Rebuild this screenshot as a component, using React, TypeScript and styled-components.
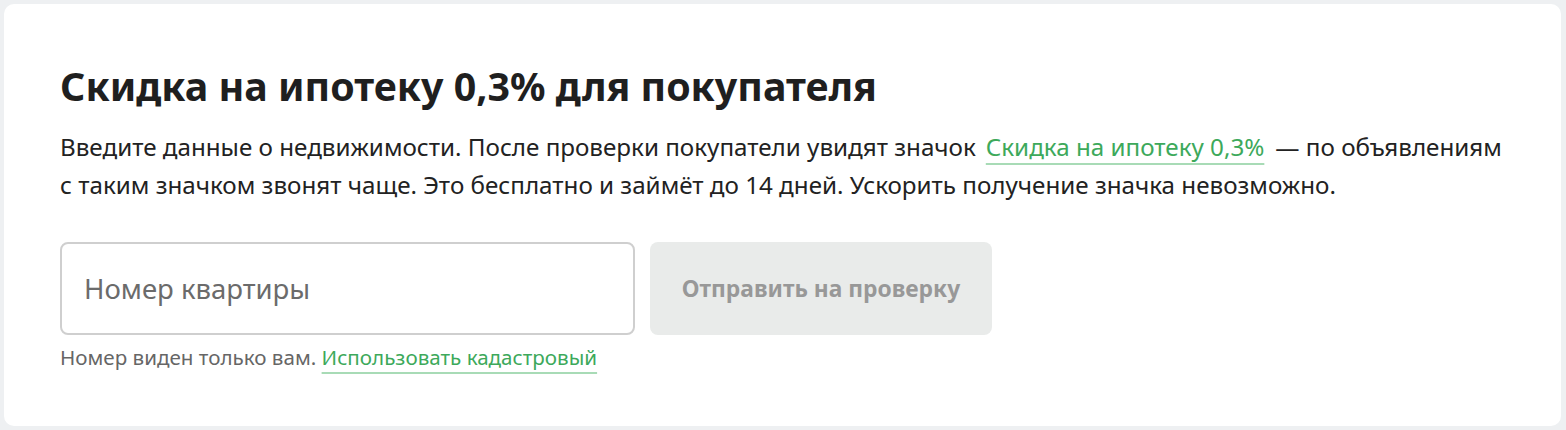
import React from "react";
import styled, { createGlobalStyle } from "styled-components";

const Global = createGlobalStyle`
  html, body { margin: 0; padding: 0; background: #eef0f2; }
  body { font-family: "Noto Sans", "Open Sans", sans-serif; }
  * { box-sizing: border-box; }
`;

const Page = styled.div`
  padding: 4px 5px 4px 4px;
`;

const Card = styled.section`
  background: #ffffff;
  border-radius: 10px;
  padding: 56px 56px 40px 56px;
  min-height: 422px;
`;

const Title = styled.h1`
  margin: 0;
  font-size: 39.4px;
  line-height: 52px;
  font-weight: 700;
  color: #1f1f1f;
`;

const Description = styled.p`
  margin: 16px 0 0;
  font-size: 24.2px;
  line-height: 38px;
  color: #222222;
`;

const GreenLink = styled.a<{ $spaced?: boolean }>`
  color: #3da95b;
  text-decoration: underline;
  text-decoration-color: #a8dbb6;
  text-decoration-thickness: 2px;
  text-underline-offset: 7px;
  margin: ${(p) => (p.$spaced ? "0 11px 0 10px" : "0")};
`;

const FormRow = styled.div`
  display: flex;
  gap: 15px;
  margin-top: 38px;
`;

const Field = styled.div`
  display: flex;
  flex-direction: column;
  width: 575px;
`;

const Input = styled.input`
  height: 93px;
  width: 100%;
  border: 2px solid #cfcfcf;
  border-radius: 8px;
  padding: 0 22px;
  font-family: inherit;
  font-size: 27.5px;
  color: #222;
  outline: none;
  &::placeholder { color: #6b6b6b; }
`;

const SubmitButton = styled.button`
  height: 93px;
  width: 342px;
  border: none;
  border-radius: 8px;
  background: #e9ebea;
  color: #989898;
  font-family: inherit;
  font-weight: 700;
  font-size: 22.8px;
  cursor: default;
`;

const Hint = styled.div`
  margin-top: 8px;
  font-size: 20.6px;
  line-height: 28px;
  color: #666666;
`;

export default function App() {
  return (
    <>
      <Global />
      <Page>
        <Card>
          <Title>Скидка на ипотеку 0,3% для покупателя</Title>
          <Description>
            Введите данные о недвижимости. После проверки покупатели увидят значок
            <GreenLink $spaced href="#">Скидка на ипотеку 0,3%</GreenLink>
            — по объявлениям с таким значком звонят чаще. Это бесплатно и займёт до 14 дней. Ускорить получение значка невозможно.
          </Description>
          <FormRow>
            <Field>
              <Input placeholder="Номер квартиры" />
              <Hint>
                Номер виден только вам. <GreenLink href="#">Использовать кадастровый</GreenLink>
              </Hint>
            </Field>
            <SubmitButton disabled>Отправить на проверку</SubmitButton>
          </FormRow>
        </Card>
      </Page>
    </>
  );
}
